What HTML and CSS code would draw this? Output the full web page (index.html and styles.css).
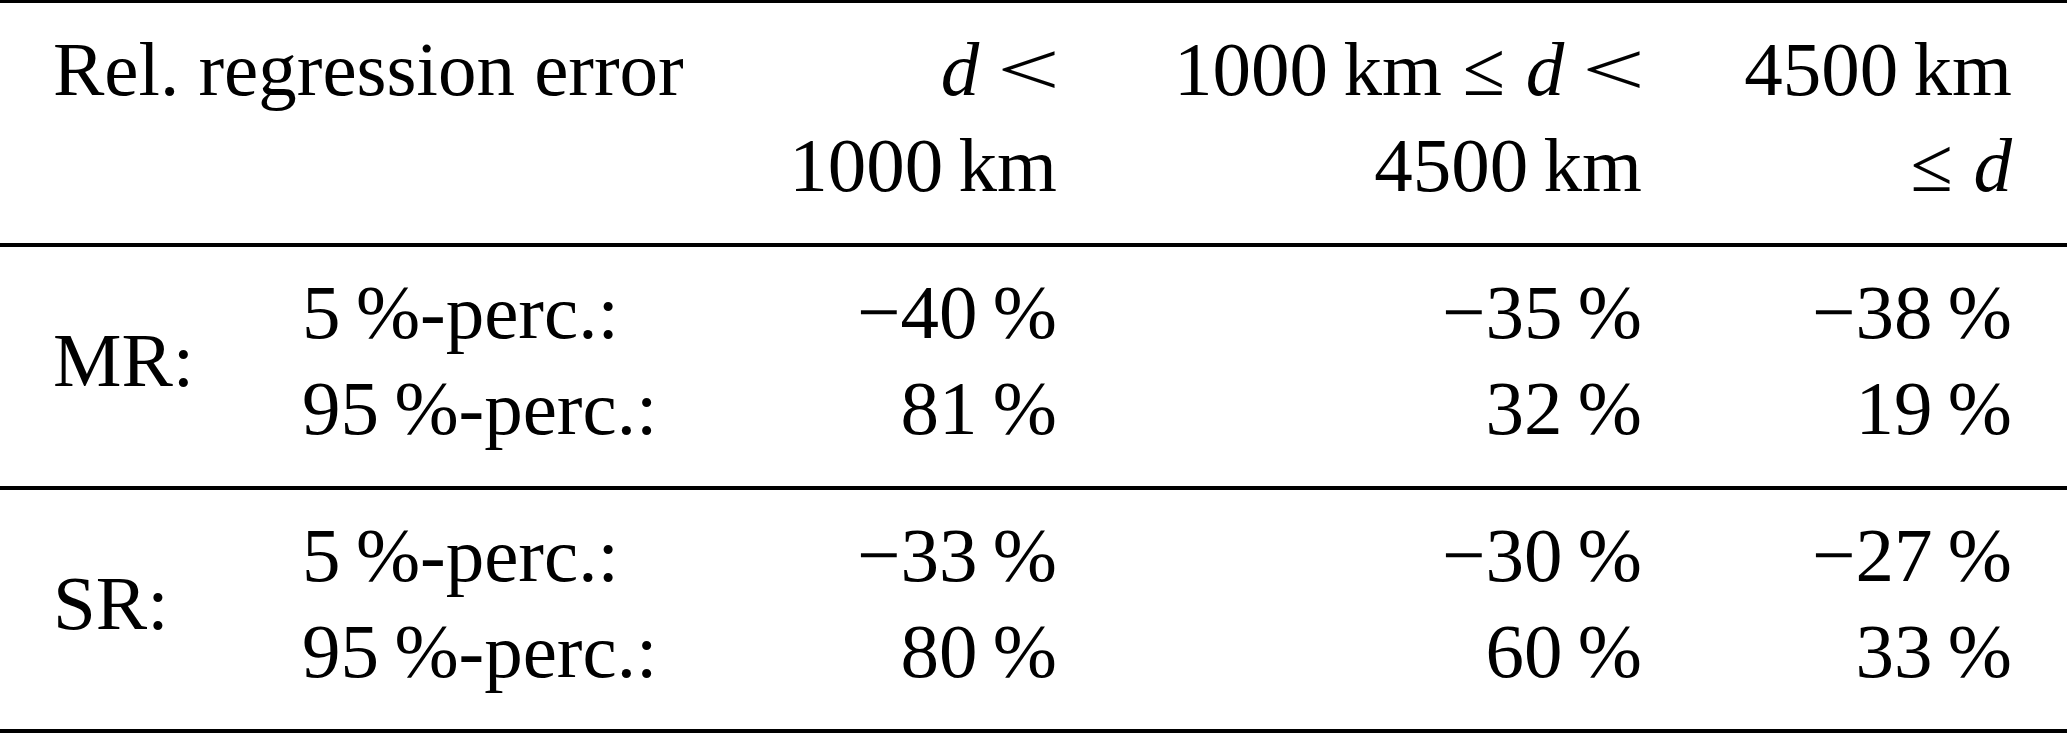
FILE: index.html
```html
<!DOCTYPE html>
<html>
<head>
  <meta charset="UTF-8">
  <title>Relative regression error</title>
  <link rel="stylesheet" href="styles.css">
</head>
<body>
  <div class="table">
    <div class="rule top"></div>

    <div class="block head">
      <div class="cell span2">Rel. regression error</div>
      <div class="cell num"><i>d</i><span class="rel lt">&lt;</span></div>
      <div class="cell num">1000&thinsp;km<span class="rel">&le;</span><i>d</i><span class="rel lt">&lt;</span></div>
      <div class="cell num">4500&thinsp;km</div>
      <div class="cell span2"></div>
      <div class="cell num">1000&thinsp;km</div>
      <div class="cell num">4500&thinsp;km</div>
      <div class="cell num"><span class="rel">&le;</span><i>d</i></div>
    </div>

    <div class="rule"></div>

    <div class="block">
      <div class="cell group">MR:</div>
      <div class="cell">5&thinsp;%-perc.:</div>
      <div class="cell num">&minus;40&thinsp;%</div>
      <div class="cell num">&minus;35&thinsp;%</div>
      <div class="cell num">&minus;38&thinsp;%</div>
      <div class="cell">95&thinsp;%-perc.:</div>
      <div class="cell num">81&thinsp;%</div>
      <div class="cell num">32&thinsp;%</div>
      <div class="cell num">19&thinsp;%</div>
    </div>

    <div class="rule"></div>

    <div class="block">
      <div class="cell group">SR:</div>
      <div class="cell">5&thinsp;%-perc.:</div>
      <div class="cell num">&minus;33&thinsp;%</div>
      <div class="cell num">&minus;30&thinsp;%</div>
      <div class="cell num">&minus;27&thinsp;%</div>
      <div class="cell">95&thinsp;%-perc.:</div>
      <div class="cell num">80&thinsp;%</div>
      <div class="cell num">60&thinsp;%</div>
      <div class="cell num">33&thinsp;%</div>
    </div>

    <div class="rule"></div>
  </div>
</body>
</html>
```

FILE: styles.css
```css
html, body { margin: 0; padding: 0; background: #ffffff; }
body {
  font-family: "Liberation Serif", "Times New Roman", serif;
  font-size: 77px; color: #000000;
}
.table { width: 2067px; }
.rule { height: 4px; background: #000000; }
.rule.top { height: 3px; }
.block {
  display: grid;
  grid-template-columns: 249px 398px 357px 585px 370px;
  grid-auto-rows: 96px;
  line-height: 96px;
  padding: 17px 55px 30px 53px;
  height: 192px;
}
.block.head { padding-top: 18px; }
.cell { white-space: nowrap; }
.cell.span2 { grid-column: span 2; }
.cell.group { grid-row: span 2; align-self: center; }
.cell.num { text-align: right; }
.cell i { font-style: italic; }
.rel { display: inline-block; margin: 0 0.27em; }
.rel:last-child { margin-right: 0; }
.rel.lt { width: 0.74em; text-align: center; transform: scaleX(1.45); }
```
